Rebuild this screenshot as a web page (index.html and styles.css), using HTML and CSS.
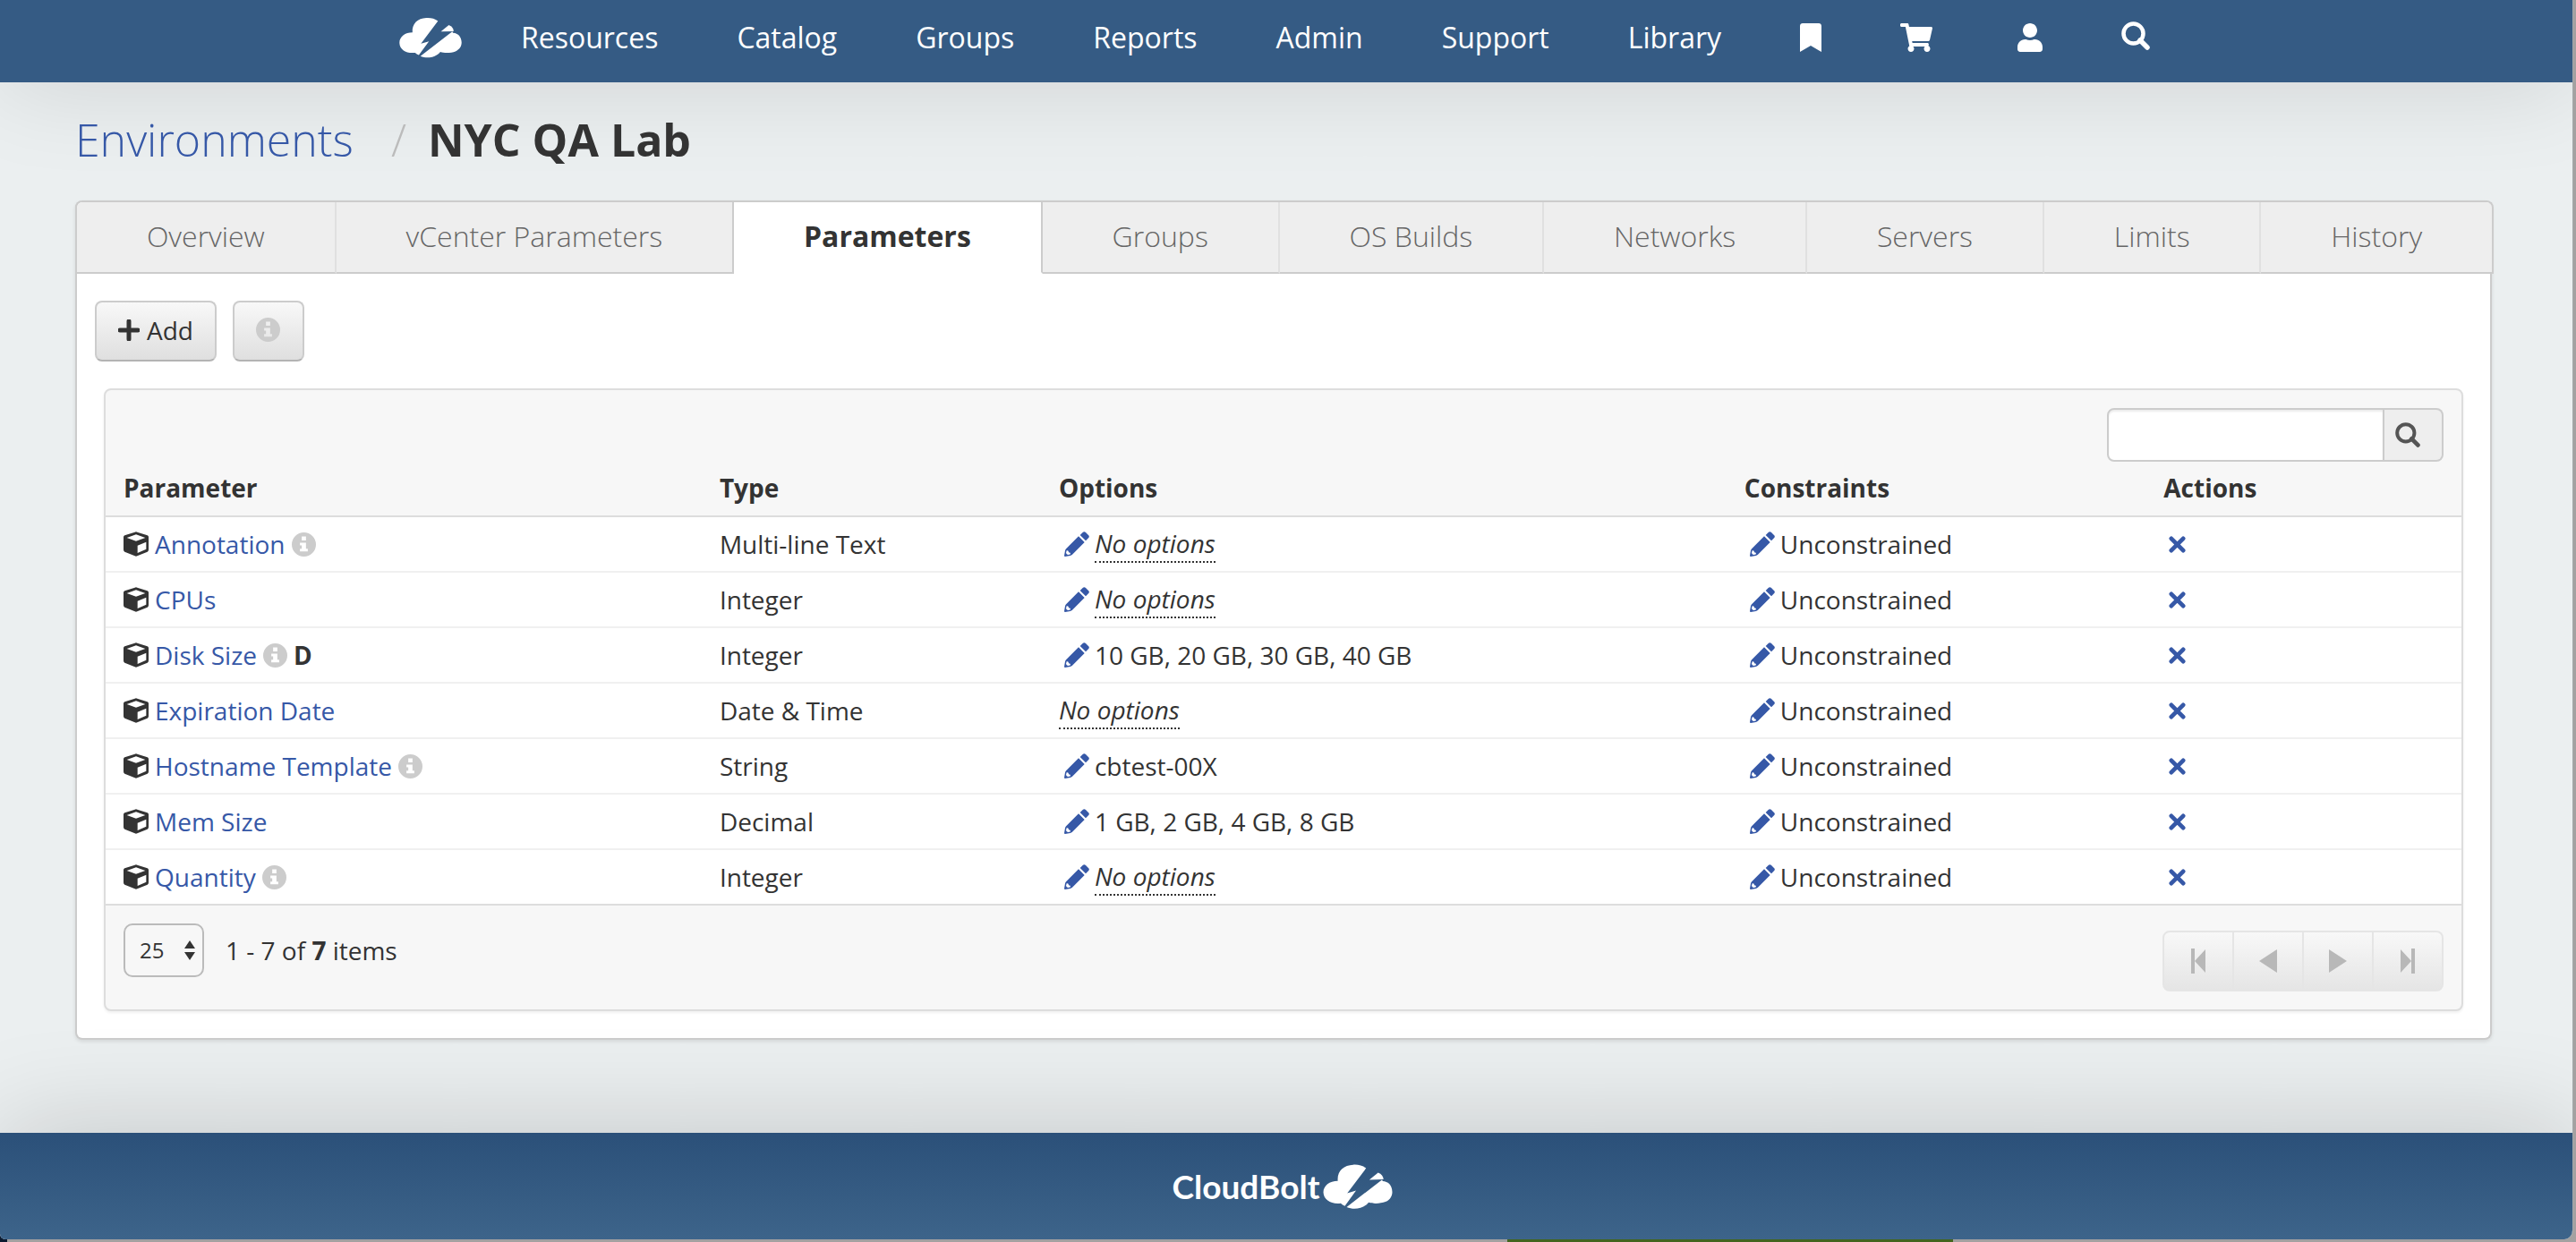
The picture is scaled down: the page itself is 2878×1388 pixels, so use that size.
FILE: index.html
```
<!DOCTYPE html>
<html lang="en">
<head>
<meta charset="utf-8">
<title>NYC QA Lab</title>
<link rel="stylesheet" href="styles.css">
</head>
<body>
<svg class="sprite" aria-hidden="true">
  <symbol id="cloud" viewBox="0 0 236 152">
    <path d="M146 14C134 4 118 1 102 2C70 3 47 24 50 57C22 57 1 73 1 96C2 122 28 137 60 133Q66 139 74 142L112 90L82 99Z"/>
    <path d="M157 53L187 29Q204 36 205 52Z"/>
    <path d="M200 53L80 146C106 157 138 151 155 130C172 136 196 134 212 128C229 120 235 108 235 94C234 70 220 59 203 58Z"/>
  </symbol>
  <symbol id="bookmark" viewBox="0 0 384 512"><path d="M0 512V48C0 21 21 0 48 0h288c27 0 48 21 48 48v464L192 400z"/></symbol>
  <symbol id="cart" viewBox="0 0 576 512"><path d="M528.12 301.319l47.273-208C578.806 78.301 567.391 64 551.99 64H159.208l-9.166-44.81C147.758 8.021 137.93 0 126.529 0H24C10.745 0 0 10.745 0 24v16c0 13.255 10.745 24 24 24h69.883l70.248 343.435C147.325 417.1 136 435.222 136 456c0 30.928 25.072 56 56 56s56-25.072 56-56c0-15.674-6.447-29.835-16.824-40h209.647C430.447 426.165 424 440.326 424 456c0 30.928 25.072 56 56 56s56-25.072 56-56c0-22.172-12.888-41.332-31.579-50.405l5.517-24.276c3.413-15.018-8.002-29.319-23.403-29.319H218.117l-6.545-32h293.145c11.206 0 20.92-7.754 23.403-18.681z"/></symbol>
  <symbol id="user" viewBox="0 0 448 512"><path d="M224 256c70.7 0 128-57.3 128-128S294.7 0 224 0 96 57.3 96 128s57.3 128 128 128zm89.6 32h-16.7c-22.2 10.2-46.9 16-72.9 16s-50.6-5.8-72.9-16h-16.7C60.2 288 0 348.2 0 422.4V464c0 26.5 21.500 48 48 48h352c26.500 0 48-21.500 48-48v-41.600c0-74.200-60.200-134.400-134.400-134.400z"/></symbol>
  <symbol id="search" viewBox="0 0 32 32"><circle cx="13.500" cy="13.500" r="11" fill="none" stroke="currentColor" stroke-width="4.500"/><path d="M21 21L29 29" stroke="currentColor" stroke-width="5.500" stroke-linecap="round"/></symbol>
  <symbol id="info" viewBox="0 0 80 80"><path fill-rule="evenodd" d="M40 0A40 40 0 1 0 40 80A40 40 0 1 0 40 0ZM33 13H47V27H33ZM27 34H47V54H53V63H27V54H33V43H27Z"/></symbol>
  <symbol id="cube" viewBox="0 0 84 82"><path fill-rule="evenodd" d="M38 1Q42 -1 46 1L80 12Q84 14 84 18V60Q84 65 80 67L46 81Q42 83 38 81L4 67Q0 65 0 60V18Q0 14 4 12ZM42 9L11 20L42 31L73 20ZM47 46V71L76 58V34Z"/></symbol>
  <symbol id="pencil" viewBox="0 0 84 84"><path fill-rule="evenodd" d="M48 16L68 36L27 77Q24 80 20 81L3 84Q0 84 0 81L3 64Q4 60 7 57ZM8 64L6 72Q8 78 14 78L21 76Q22 70 15 70Q15 62 8 64Z"/><path d="M53 12L62 3Q67 -2 72 3L81 12Q86 17 81 22L72 31Z"/></symbol>
  <symbol id="times" viewBox="0 0 20 20"><path d="M3 3L17 17M17 3L3 17" stroke="currentColor" stroke-width="5" stroke-linecap="round"/></symbol>
  <symbol id="plus" viewBox="0 0 24 24"><path d="M12 2V22M2 12H22" stroke="currentColor" stroke-width="5" stroke-linecap="round"/></symbol>
  <symbol id="first" viewBox="0 0 24 28"><path d="M4 0H8V28H4ZM20 1V27L8 14Z"/></symbol>
  <symbol id="prev" viewBox="0 0 24 28"><path d="M22 1V27L2 14Z"/></symbol>
  <symbol id="next" viewBox="0 0 24 28"><path d="M2 1V27L22 14Z"/></symbol>
  <symbol id="last" viewBox="0 0 24 28"><path d="M16 0H20V28H16ZM4 1V27L16 14Z"/></symbol>
</svg>
<div class="window">
  <header class="topbar">
    <nav class="nav" aria-label="Main">
      <a href="#" aria-label="Home"><svg class="brand"><use href="#cloud"/></svg></a>
      <a href="#">Resources</a>
      <a href="#">Catalog</a>
      <a href="#">Groups</a>
      <a href="#">Reports</a>
      <a href="#">Admin</a>
      <a href="#">Support</a>
      <a href="#">Library</a>
      <a href="#" aria-label="Bookmarks"><svg class="ico-bookmark"><use href="#bookmark"/></svg></a>
      <a href="#" aria-label="Cart"><svg class="ico-cart"><use href="#cart"/></svg></a>
      <a href="#" aria-label="Account"><svg class="ico-user"><use href="#user"/></svg></a>
      <a href="#" aria-label="Search"><svg class="ico-search"><use href="#search"/></svg></a>
    </nav>
  </header>
  <main class="page">
    <h1 class="crumbs"><a href="#">Environments</a><span class="slash">/</span><strong>NYC QA Lab</strong></h1>
    <section class="panel">
      <nav class="tabs" aria-label="Sections">
        <a href="#">Overview</a>
        <a href="#">vCenter Parameters</a>
        <a href="#" class="active" aria-current="page">Parameters</a>
        <a href="#">Groups</a>
        <a href="#">OS Builds</a>
        <a href="#">Networks</a>
        <a href="#">Servers</a>
        <a href="#">Limits</a>
        <a href="#">History</a>
      </nav>
      <div class="toolbar">
        <button type="button" class="btn"><svg class="ico-plus"><use href="#plus"/></svg>Add</button>
        <button type="button" class="btn btn-info" aria-label="Info"><svg class="ico-info"><use href="#info"/></svg></button>
      </div>
      <div class="grid">
        <form class="search">
          <input type="text" aria-label="Search parameters">
          <button type="submit" aria-label="Search"><svg class="ico-find"><use href="#search"/></svg></button>
        </form>
        <table>
          <colgroup><col class="c1"><col class="c2"><col class="c3"><col class="c4"><col class="c5"></colgroup>
          <thead>
            <tr><th>Parameter</th><th>Type</th><th>Options</th><th>Constraints</th><th>Actions</th></tr>
          </thead>
          <tbody>
            <tr>
              <td><span class="cell"><svg class="ico-cube"><use href="#cube"/></svg><a href="#">Annotation</a><svg class="ico-info"><use href="#info"/></svg></span></td>
              <td>Multi-line Text</td>
              <td><span class="cell edit"><svg class="ico-pencil"><use href="#pencil"/></svg><em>No options</em></span></td>
              <td><span class="cell edit"><svg class="ico-pencil"><use href="#pencil"/></svg>Unconstrained</span></td>
              <td><a href="#" class="remove" aria-label="Remove"><svg class="ico-times"><use href="#times"/></svg></a></td>
            </tr>
            <tr>
              <td><span class="cell"><svg class="ico-cube"><use href="#cube"/></svg><a href="#">CPUs</a></span></td>
              <td>Integer</td>
              <td><span class="cell edit"><svg class="ico-pencil"><use href="#pencil"/></svg><em>No options</em></span></td>
              <td><span class="cell edit"><svg class="ico-pencil"><use href="#pencil"/></svg>Unconstrained</span></td>
              <td><a href="#" class="remove" aria-label="Remove"><svg class="ico-times"><use href="#times"/></svg></a></td>
            </tr>
            <tr>
              <td><span class="cell"><svg class="ico-cube"><use href="#cube"/></svg><a href="#">Disk Size</a><svg class="ico-info"><use href="#info"/></svg><b>D</b></span></td>
              <td>Integer</td>
              <td><span class="cell edit"><svg class="ico-pencil"><use href="#pencil"/></svg>10 GB, 20 GB, 30 GB, 40 GB</span></td>
              <td><span class="cell edit"><svg class="ico-pencil"><use href="#pencil"/></svg>Unconstrained</span></td>
              <td><a href="#" class="remove" aria-label="Remove"><svg class="ico-times"><use href="#times"/></svg></a></td>
            </tr>
            <tr>
              <td><span class="cell"><svg class="ico-cube"><use href="#cube"/></svg><a href="#">Expiration Date</a></span></td>
              <td>Date &amp; Time</td>
              <td><span class="cell"><em>No options</em></span></td>
              <td><span class="cell edit"><svg class="ico-pencil"><use href="#pencil"/></svg>Unconstrained</span></td>
              <td><a href="#" class="remove" aria-label="Remove"><svg class="ico-times"><use href="#times"/></svg></a></td>
            </tr>
            <tr>
              <td><span class="cell"><svg class="ico-cube"><use href="#cube"/></svg><a href="#">Hostname Template</a><svg class="ico-info"><use href="#info"/></svg></span></td>
              <td>String</td>
              <td><span class="cell edit"><svg class="ico-pencil"><use href="#pencil"/></svg>cbtest-00X</span></td>
              <td><span class="cell edit"><svg class="ico-pencil"><use href="#pencil"/></svg>Unconstrained</span></td>
              <td><a href="#" class="remove" aria-label="Remove"><svg class="ico-times"><use href="#times"/></svg></a></td>
            </tr>
            <tr>
              <td><span class="cell"><svg class="ico-cube"><use href="#cube"/></svg><a href="#">Mem Size</a></span></td>
              <td>Decimal</td>
              <td><span class="cell edit"><svg class="ico-pencil"><use href="#pencil"/></svg>1 GB, 2 GB, 4 GB, 8 GB</span></td>
              <td><span class="cell edit"><svg class="ico-pencil"><use href="#pencil"/></svg>Unconstrained</span></td>
              <td><a href="#" class="remove" aria-label="Remove"><svg class="ico-times"><use href="#times"/></svg></a></td>
            </tr>
            <tr>
              <td><span class="cell"><svg class="ico-cube"><use href="#cube"/></svg><a href="#">Quantity</a><svg class="ico-info"><use href="#info"/></svg></span></td>
              <td>Integer</td>
              <td><span class="cell edit"><svg class="ico-pencil"><use href="#pencil"/></svg><em>No options</em></span></td>
              <td><span class="cell edit"><svg class="ico-pencil"><use href="#pencil"/></svg>Unconstrained</span></td>
              <td><a href="#" class="remove" aria-label="Remove"><svg class="ico-times"><use href="#times"/></svg></a></td>
            </tr>
          </tbody>
        </table>
        <div class="grid-foot">
          <div class="count">
            <span class="per-page">
              <select aria-label="Items per page"><option>25</option><option>50</option><option>100</option></select>
              <svg class="ico-sort" viewBox="0 0 12 22"><path d="M0 9L6 0L12 9ZM0 13L6 22L12 13Z"/></svg>
            </span>
            <span>1 - 7 of <b>7</b> items</span>
          </div>
          <div class="pager">
            <button type="button" disabled aria-label="First page"><svg><use href="#first"/></svg></button>
            <button type="button" disabled aria-label="Previous page"><svg><use href="#prev"/></svg></button>
            <button type="button" disabled aria-label="Next page"><svg><use href="#next"/></svg></button>
            <button type="button" disabled aria-label="Last page"><svg><use href="#last"/></svg></button>
          </div>
        </div>
      </div>
    </section>
  </main>
  <footer class="footer"><span class="wordmark">CloudBolt</span><svg class="mark"><use href="#cloud"/></svg></footer>
</div>
</body>
</html>
```
FILE: styles.css
```
* { box-sizing: border-box; }

body {
  margin: 0;
  min-height: 100vh;
  display: flex;
  padding: 0 3px 3px 0;
  background: linear-gradient(90deg, #0b1a30 8px, #a3a1a1 8px, #a3a1a1 58.5%, #43651f 58.5%, #43651f 75.8%, #a3a1a1 75.8%);
  color: #333;
  font: 28px/40px "Open Sans", "Noto Sans", sans-serif;
}

a { color: #3658a7; text-decoration: none; }
svg { display: block; flex: none; fill: currentColor; }
.sprite { position: absolute; width: 0; height: 0; }

.window {
  flex: 1;
  display: flex;
  flex-direction: column;
  background: #ebeff0;
  border-right: 1px solid #a4a9aa;
  border-radius: 0 0 10px 6px;
  overflow: hidden;
}

/* Top navigation */
.topbar {
  height: 92px;
  display: flex;
  justify-content: center;
  background: #355b84;
  box-shadow: 0 0 110px rgba(0, 0, 0, .13);
}
.nav { display: flex; align-items: center; gap: 88px; padding: 0 26px 8px 0; }
.nav a { color: #fff; font-size: 32px; line-height: 44px; }
.nav a:first-child { margin-right: -22px; }
.brand { width: 70px; height: 46px; }
.ico-bookmark { width: 24px; height: 32px; }
.ico-cart { width: 36px; height: 32px; margin-right: 7px; }
.ico-user { width: 28px; height: 32px; }
.ico-search { width: 32px; height: 32px; margin-bottom: 4px; }

.page { flex: 1; padding: 26px 90px 104px 84px; }

.crumbs {
  margin: 0 0 30px;
  display: flex;
  font-size: 50px;
  line-height: 76px;
  font-weight: 300;
}
.crumbs .slash { margin: 0 24px 0 42px; color: #bbb; }
.crumbs strong { font-weight: 700; }

/* Tabbed panel */
.panel {
  background: #fff;
  border: 2px solid #ccc;
  border-top: 0;
  border-radius: 8px;
  box-shadow: 0 2px 4px rgba(0, 0, 0, .1);
}
.tabs {
  display: flex;
  margin: 0 -4px 0 -2px;
  border: 2px solid #ccc;
  border-bottom: 0;
  border-radius: 8px 8px 0 0;
}
.tabs a {
  flex: 1 1 auto;
  height: 80px;
  border-right: 2px solid #e0e0e0;
  border-bottom: 2px solid #ccc;
  background: #eee;
  color: #666;
  font-size: 32px;
  line-height: 76px;
  font-weight: 300;
  text-align: center;
}
.tabs a:first-child { border-top-left-radius: 6px; }
.tabs a:last-child { border-right: 0; border-top-right-radius: 6px; }
.tabs a:has(+ .active), .tabs .active { border-right-color: #ccc; }
.tabs .active {
  background: #fff;
  border-bottom-color: #fff;
  color: #333;
  font-weight: 700;
}

.toolbar { display: flex; gap: 18px; padding: 30px 20px; }
.btn {
  height: 68px;
  display: flex;
  align-items: center;
  gap: 8px;
  padding: 0 24px 3px;
  border: 2px solid #ccc;
  border-bottom-color: #b3b3b3;
  border-radius: 8px;
  background: linear-gradient(#f8f8f8, #dfdfdf);
  color: #333;
  font: inherit;
}
.btn-info { width: 80px; }
.ico-plus { width: 24px; height: 24px; }
.ico-info { width: 27px; height: 27px; color: #ccc; }

/* Data grid */
.grid {
  margin: 0 30px 30px;
  background: #f7f7f7;
  border: 2px solid #ddd;
  border-radius: 8px;
  box-shadow: 0 2px 3px rgba(0, 0, 0, .06);
}
.search { display: flex; justify-content: flex-end; padding: 20px 20px 0; }
.search input {
  width: 310px;
  height: 60px;
  padding: 0 12px;
  border: 2px solid #ccc;
  border-radius: 8px 0 0 8px;
  background: #fff;
  box-shadow: inset 0 2px 2px rgba(0, 0, 0, .08);
  font: inherit;
}
.search button {
  width: 66px;
  height: 60px;
  padding: 0 0 0 12px;
  border: 2px solid #ccc;
  border-left: 0;
  border-radius: 0 8px 8px 0;
  background: #eee;
  color: #555;
}
.ico-find { width: 28px; height: 28px; }

table { width: 100%; border-collapse: separate; border-spacing: 0; table-layout: fixed; }
.c1 { width: 25.3%; }
.c2 { width: 14.4%; }
.c3 { width: 29.1%; }
.c4 { width: 17.8%; }
th { padding: 9px 0 11px 20px; border-bottom: 2px solid #ddd; text-align: left; font-weight: 700; }
td { height: 62px; padding: 0 0 0 20px; border-bottom: 2px solid #f0f0f0; background: #fff; }
tbody tr:last-child td { border-bottom-color: #ddd; }
.cell { display: flex; align-items: center; gap: 7px; }
.cell.edit { padding-left: 6px; gap: 6px; }
.cell em { border-bottom: 2px dotted #333; }
.ico-cube { width: 28px; height: 28px; }
.ico-pencil { width: 28px; height: 28px; color: #3658a7; }
.remove { display: flex; padding-left: 6px; }
.ico-times { width: 19px; height: 19px; }

.grid-foot { display: flex; justify-content: space-between; padding: 20px; }
.count { display: flex; align-items: center; gap: 24px; height: 60px; }
.per-page { position: relative; }
.per-page select {
  display: block;
  width: 90px;
  height: 60px;
  padding: 0 16px;
  appearance: none;
  border: 2px solid #bbb;
  border-radius: 10px;
  background: #f7f7f7;
  color: #333;
  font: 24px/40px "Open Sans", "Noto Sans", sans-serif;
}
.ico-sort { position: absolute; right: 10px; top: 19px; width: 12px; height: 22px; pointer-events: none; }
.pager { display: flex; padding-top: 8px; }
.pager button {
  width: 78px;
  height: 68px;
  display: grid;
  place-items: center;
  padding: 0;
  border: 2px solid #e5e5e5;
  border-left-width: 0;
  background: linear-gradient(#f8f8f8, #e5e5e5);
  color: #b8b8b8;
}
.pager button:first-child { width: 80px; border-left-width: 2px; border-radius: 8px 0 0 8px; }
.pager button:last-child { border-radius: 0 8px 8px 0; }
.pager svg { width: 24px; height: 28px; }

.footer {
  height: 119px;
  display: flex;
  align-items: center;
  justify-content: center;
  gap: 4px;
  padding-right: 8px;
  background: linear-gradient(#2b5079, #3d648a);
  box-shadow: 0 0 120px rgba(0, 0, 0, .18);
  color: #fff;
}
.wordmark { font: 700 37px/40px Lato, "Open Sans", sans-serif; }
.mark { width: 78px; height: 50px; }
```
